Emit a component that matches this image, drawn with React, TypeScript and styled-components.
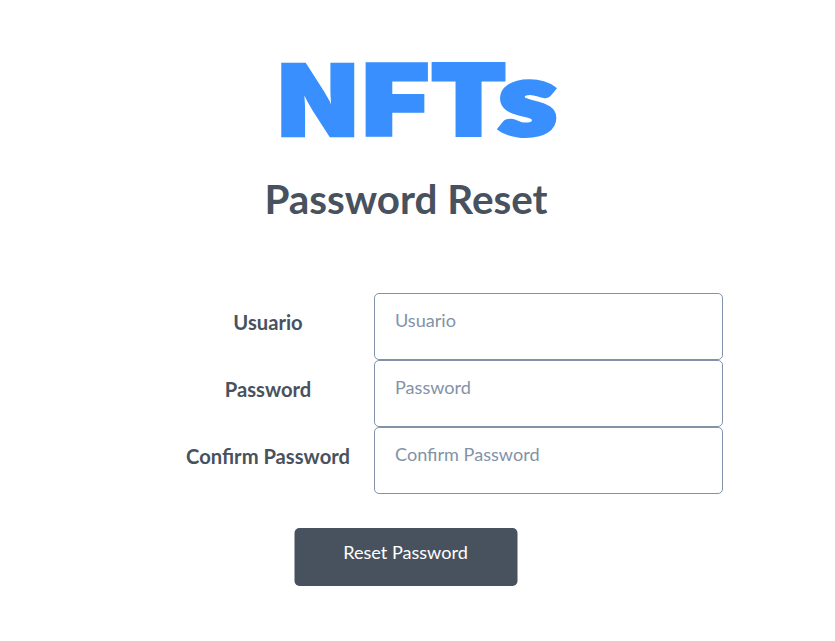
import React from 'react';
import styled, { createGlobalStyle } from 'styled-components';

const GlobalStyle = createGlobalStyle`
  * { box-sizing: border-box; }
  body { margin: 0; background: #fff; font-family: Lato, sans-serif; color: #48525e; }
`;
const Page = styled.main`
  width: 812px;
  height: 641px;
  display: flex;
  flex-direction: column;
  align-items: center;
  overflow: hidden;
`;
const Logo = styled.svg`
  display: block;
  width: 290px;
  height: 100px;
  margin: 50px 0 0 26px;
  flex: none;
  overflow: visible;
  fill: #388ffd;
  stroke: #388ffd;
`;
const LogoLetter = styled.text<{ $face: string; $size: number; $stroke: number }>`
  font-family: ${(p) => p.$face}, sans-serif;
  font-weight: 900;
  font-size: ${(p) => p.$size}px;
  stroke-width: ${(p) => p.$stroke}px;
  vector-effect: non-scaling-stroke;
`;
const Title = styled.h1`
  margin: 25px 0 0;
  font-size: 40.4px;
  line-height: 48px;
  font-weight: 700;
`;
const Form = styled.form`
  margin-top: 70px;
  display: flex;
  flex-direction: column;
  align-items: center;
`;
const Fields = styled.div`
  display: grid;
  grid-template-columns: 212px 349px;
  margin-left: 73px;
`;
const Label = styled.label`
  display: flex;
  align-items: center;
  justify-content: center;
  height: 67px;
  padding-bottom: 10px;
  font-size: 20.2px;
  font-weight: 700;
`;
const Input = styled.input`
  width: 349px;
  height: 67px;
  margin: 0;
  padding: 8px 20px 22px;
  border: 1px solid #8292a8;
  border-radius: 5px;
  background: #fff;
  color: #48525e;
  font: 400 18.1px Lato, sans-serif;
  outline: none;
  &::placeholder { color: #8292a8; opacity: 1; }
`;
const Button = styled.button`
  width: 223px;
  height: 58px;
  margin: 34px 0 0;
  padding: 0 0 10px;
  border: 0;
  border-radius: 5px;
  background: #48525e;
  color: #fff;
  font: 400 18.1px Lato, sans-serif;
  transform: translateX(-0.5px);
`;

const letters = [
  { char: 'N', face: 'Inter', size: 99, stroke: 2.6, transform: 'translate(3.7 85.7) scale(1.05 1)' },
  { char: 'F', face: 'Inter', size: 97.6, stroke: 4, transform: 'translate(88.5 85) scale(1.16 1)' },
  { char: 'T', face: 'Inter', size: 97.6, stroke: 4, transform: 'translate(156.8 85) scale(1.128 1)' },
  { char: 's', face: 'Lato', size: 103, stroke: 7, transform: 'translate(225.3 83.8) scale(1.25 0.955)' },
];

const fields = [
  { id: 'user', label: 'Usuario', type: 'text' },
  { id: 'password', label: 'Password', type: 'password' },
  { id: 'confirm', label: 'Confirm Password', type: 'password' },
];

export default function App() {
  return (
    <>
      <GlobalStyle />
      <Page>
        <Logo viewBox="0 0 290 100" role="img" aria-label="NFTs">
          {letters.map((l) => (
            <LogoLetter key={l.char} $face={l.face} $size={l.size} $stroke={l.stroke} transform={l.transform}>
              {l.char}
            </LogoLetter>
          ))}
        </Logo>
        <Title>Password Reset</Title>
        <Form onSubmit={(e) => e.preventDefault()}>
          <Fields>
            {fields.map((f) => (
              <React.Fragment key={f.id}>
                <Label htmlFor={f.id}>{f.label}</Label>
                <Input id={f.id} type={f.type} placeholder={f.label} />
              </React.Fragment>
            ))}
          </Fields>
          <Button type="submit">Reset Password</Button>
        </Form>
      </Page>
    </>
  );
}
